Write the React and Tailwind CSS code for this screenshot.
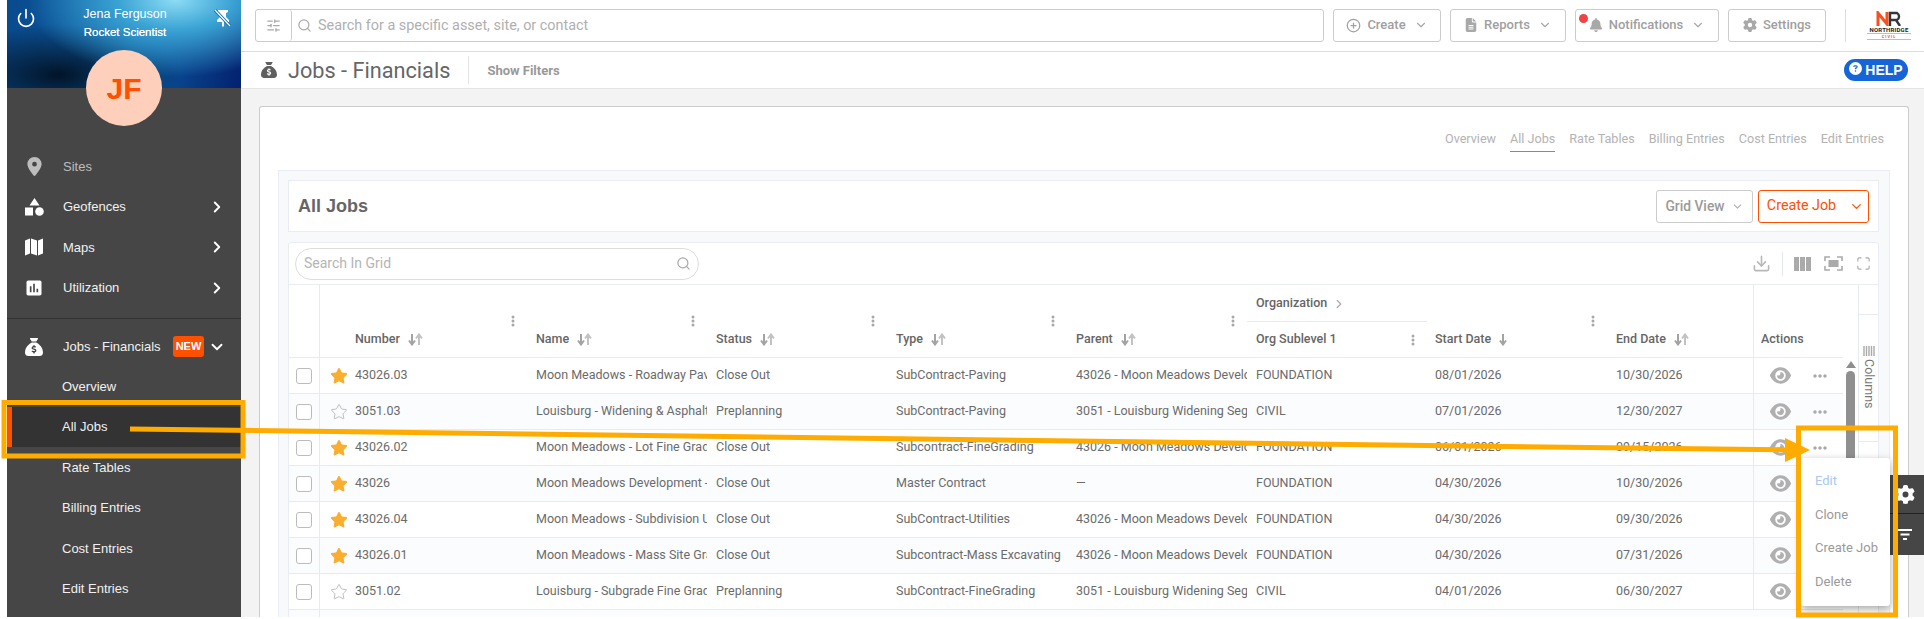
import React from 'react';
import { Power, ChevronRight, ChevronDown, Search, SlidersHorizontal, CirclePlus, Star, Download, Maximize } from 'lucide-react';
import { FaLocationDot, FaSackDollar, FaEye, FaGear, FaBell, FaFileLines, FaEllipsis, FaCircleQuestion } from 'react-icons/fa6';
import { MdInsertChart } from 'react-icons/md';

const rows = [
  { n: '43026.03', s: true, name: 'Moon Meadows - Roadway Paving', st: 'Close Out', t: 'SubContract-Paving', p: '43026 - Moon Meadows Development', o: 'FOUNDATION', a: '08/01/2026', b: '10/30/2026' },
  { n: '3051.03', s: false, name: 'Louisburg - Widening & Asphalt Paving', st: 'Preplanning', t: 'SubContract-Paving', p: '3051 - Louisburg Widening Segment', o: 'CIVIL', a: '07/01/2026', b: '12/30/2027' },
  { n: '43026.02', s: true, name: 'Moon Meadows - Lot Fine Grading', st: 'Close Out', t: 'Subcontract-FineGrading', p: '43026 - Moon Meadows Development', o: 'FOUNDATION', a: '06/01/2026', b: '09/15/2026' },
  { n: '43026', s: true, name: 'Moon Meadows Development - Master', st: 'Close Out', t: 'Master Contract', p: '—', o: 'FOUNDATION', a: '04/30/2026', b: '10/30/2026' },
  { n: '43026.04', s: true, name: 'Moon Meadows - Subdivision Utilities', st: 'Close Out', t: 'SubContract-Utilities', p: '43026 - Moon Meadows Development', o: 'FOUNDATION', a: '04/30/2026', b: '09/30/2026' },
  { n: '43026.01', s: true, name: 'Moon Meadows - Mass Site Grading', st: 'Close Out', t: 'Subcontract-Mass Excavating', p: '43026 - Moon Meadows Development', o: 'FOUNDATION', a: '04/30/2026', b: '07/31/2026' },
  { n: '3051.02', s: false, name: 'Louisburg - Subgrade Fine Grading', st: 'Preplanning', t: 'SubContract-FineGrading', p: '3051 - Louisburg Widening Segment', o: 'CIVIL', a: '04/01/2026', b: '06/30/2027' },
];

function SortIcon({ single }) {
  return (
    <svg width="15" height="13" viewBox="0 0 15 13" className="shrink-0">
      <path d="M4 1v10M1 7.5l3 4 3-4" fill="none" stroke="#a3a3a3" strokeWidth="2" />
      {!single && <path d="M11 12V2M8 5.5l3-4 3 4" fill="none" stroke="#c2c2c2" strokeWidth="2" />}
    </svg>
  );
}

function Dots() {
  return (
    <svg width="4" height="12" viewBox="0 0 4 12" className="shrink-0">
      <circle cx="2" cy="2" r="1.5" fill="#a8a8a8" />
      <circle cx="2" cy="6" r="1.5" fill="#a8a8a8" />
      <circle cx="2" cy="10" r="1.5" fill="#a8a8a8" />
    </svg>
  );
}

function HeadCell({ label, w, pad, single, noDots }) {
  return (
    <div className={`${w} shrink-0 flex flex-col justify-end pb-[9px]`}>
      <div className="h-[18px] flex items-center justify-end pr-[12px]">{!noDots && <Dots />}</div>
      <div className={`${pad} h-[18px] flex items-center gap-[8px] text-[12.5px] font-medium text-[#666]`}>
        <span>{label}</span>
        <SortIcon single={single} />
      </div>
    </div>
  );
}

function NavItem({ icon, label, chevron, dim }) {
  return (
    <div className={`h-[40.5px] flex items-center pl-[17px] pr-[15px] text-[13px] ${dim ? 'text-[#bdbdbd]' : 'text-[#f0f0f0]'}`}>
      <span className="w-[20px] flex justify-center">{icon}</span>
      <span className="ml-[19px] flex-1">{label}</span>
      {chevron && <ChevronRight size={18} strokeWidth={2.5} className="text-white" />}
    </div>
  );
}

function SubItem({ label, active }) {
  return (
    <div className={`h-[40.5px] flex items-center text-[13px] text-[#f0f0f0] ${active ? 'bg-[#333] border-l-[5px] border-[#ff5000] pl-[50px]' : 'pl-[55px]'}`}>
      {label}
    </div>
  );
}

function TopBtn({ w, icon, label, chevron, children }) {
  return (
    <div className={`${w} relative h-[33px] shrink-0 border border-[#ccc] rounded-[3px] bg-white flex items-center justify-center gap-[6px] text-[13px] font-medium text-[#a0a0a0]`}>
      {children}
      {icon}
      <span>{label}</span>
      {chevron && <ChevronDown size={14} className="ml-[2px] text-[#a8a8a8]" />}
    </div>
  );
}

export default function App() {
  return (
    <div className="relative w-[1924px] h-[619px] overflow-hidden bg-white font-['Roboto',sans-serif]">
      <div className="flex h-[617px] pl-[7px]">
        {/* Sidebar */}
        <aside className="w-[234px] shrink-0 bg-[#464646] flex flex-col font-['Liberation_Sans',sans-serif]">
          <div className="relative h-[88px] shrink-0 bg-[radial-gradient(ellipse_at_72%_0%,#8ddcf5_0%,#3aa3d4_24%,rgba(20,90,160,0)_62%),radial-gradient(ellipse_at_22%_85%,#021428_0%,rgba(2,20,40,0)_48%),linear-gradient(100deg,#0a4a8e_0%,#0c5ea3_55%,#04216e_100%)]">
            <div className="flex items-start justify-between pl-[9px] pr-[9px] pt-[6px]">
              <Power size={20} strokeWidth={2} className="text-white mt-[2px]" />
              <div className="text-center text-white">
                <div className="text-[12.5px] leading-[17px]">Jena Ferguson</div>
                <div className="text-[11.5px] leading-[19px] [text-shadow:0_0_0.6px_#fff]">Rocket Scientist</div>
              </div>
              <svg width="18" height="18" viewBox="0 0 18 18" className="mt-[3px]">
                <path d="M4 1h10v2l-2 1v4l3 3v2H10v4l-1 1-1-1v-4H3v-2l3-3V4L4 3z" fill="#fff" />
                <path d="M1 1l15 16" stroke="#0f6cae" strokeWidth="3" />
                <path d="M1 1l15 16" stroke="#fff" strokeWidth="1.2" />
              </svg>
            </div>
            <div className="absolute left-[79px] top-[50px] w-[76px] h-[76px] rounded-full bg-[#fed0bc] flex items-center justify-center text-[#ff5000] text-[30px] font-bold">JF</div>
          </div>
          <nav className="pt-[58px] flex flex-col">
            <NavItem dim label="Sites" icon={<FaLocationDot size={19} className="text-[#bdbdbd]" />} />
            <NavItem chevron label="Geofences" icon={
              <svg width="19" height="18" viewBox="0 0 19 18" fill="#fff">
                <path d="M9.5 0l5 7.5h-10z" />
                <rect x="0" y="9.5" width="8" height="8" />
                <circle cx="14.5" cy="13.5" r="4.3" />
              </svg>
            } />
            <NavItem chevron label="Maps" icon={
              <svg width="18" height="18" viewBox="0 0 18 18" fill="#fff">
                <path d="M0 2.5l5-2v15l-5 2z" />
                <path d="M6 0.5l6 2v15l-6-2z" />
                <path d="M13 2.500l5-2v15l-5 2z" />
              </svg>
            } />
            <NavItem chevron label="Utilization" icon={<MdInsertChart size={22} className="text-white" />} />
            <div className="mt-[10px] border-t border-[#333]" />
            <div className="mt-[8px] h-[39px] flex items-center pl-[17px] pr-[15px] text-[13px] text-[#f0f0f0]">
              <span className="w-[20px] flex justify-center"><FaSackDollar size={18} className="text-white" /></span>
              <span className="ml-[19px] flex-1">Jobs - Financials</span>
              <span className="w-[31px] h-[21px] mr-[4px] bg-[#ff5000] rounded-[3px] text-white text-[11px] font-bold flex items-center justify-center">NEW</span>
              <ChevronDown size={18} strokeWidth={2.5} className="text-white" />
            </div>
            <SubItem label="Overview" />
            <SubItem label="All Jobs" active />
            <SubItem label="Rate Tables" />
            <SubItem label="Billing Entries" />
            <SubItem label="Cost Entries" />
            <SubItem label="Edit Entries" />
          </nav>
        </aside>

        {/* Main */}
        <main className="flex-1 min-w-0 flex flex-col">
          <div className="h-[52px] shrink-0 border-b border-[#ddd] flex items-center pl-[14px] pr-[13px] gap-[9px] pb-[1px]">
            <div className="flex-1 h-[33px] border border-[#ccc] rounded-[3px] flex items-center">
              <div className="w-[36px] h-full border-r border-[#ccc] rounded-[3px] flex items-center justify-center">
                <SlidersHorizontal size={15} className="text-[#a8a8a8]" />
              </div>
              <Search size={15} className="ml-[5px] text-[#aaa]" />
              <span className="ml-[6px] pt-[2px] text-[14.4px] text-[#b0b0b0]">Search for a specific asset, site, or contact</span>
            </div>
            <TopBtn w="w-[108px]" label="Create" chevron icon={<CirclePlus size={15} className="text-[#a0a0a0]" />} />
            <TopBtn w="w-[116px]" label="Reports" chevron icon={<FaFileLines size={14} className="text-[#a8a8a8]" />} />
            <TopBtn w="w-[144px]" label="Notifications" chevron icon={<FaBell size={14} className="text-[#a8a8a8]" />}>
              <span className="absolute left-[3px] top-[4px] w-[9px] h-[9px] rounded-full bg-[#ee4444]" />
            </TopBtn>
            <TopBtn w="w-[98px]" label="Settings" icon={<FaGear size={14} className="text-[#a8a8a8]" />} />
            <div className="ml-[10px] w-px h-[33px] bg-[#ddd]" />
            <div className="ml-[12px] w-[44px] flex flex-col items-center">
              <svg width="26" height="15" viewBox="0 0 26 15">
                <path d="M2 15V2l9 11V1" fill="none" stroke="#f4511e" strokeWidth="3" />
                <path d="M14 15V2h7a4 4 0 0 1 0 7h-7m6 0l4 6" fill="none" stroke="#33383d" strokeWidth="2.4" />
              </svg>
              <span className="text-[6px] leading-[7px] font-bold text-[#222] tracking-[0.2px] whitespace-nowrap">NORTHRIDGE</span>
              <span className="text-[4px] leading-[5px] font-bold text-[#f4511e] tracking-[1px] border-y border-[#f7a98c] w-full text-center">CIVIL</span>
            </div>
          </div>

          <div className="h-[37px] shrink-0 border-b border-[#e4e4e4] flex items-center pl-[20px] pr-[16px]">
            <FaSackDollar size={16} className="text-[#5f5f5f]" />
            <span className="ml-[11px] pt-[2px] text-[21.7px] text-[#666]">Jobs - Financials</span>
            <span className="ml-[18px] w-px h-[28px] bg-[#e4e4e4]" />
            <span className="ml-[18px] pt-[1px] text-[13px] font-bold text-[#999]">Show Filters</span>
            <span className="ml-auto w-[64px] h-[22px] rounded-full bg-[#1565d8] flex items-center justify-center gap-[3px] text-white text-[14px] font-bold font-['Liberation_Sans',sans-serif]">
              <FaCircleQuestion size={13} className="-mt-[3px]" />HELP
            </span>
          </div>

          <div className="flex-1 min-h-0 bg-[#f3f3f3] pt-[17px] pl-[18px] pr-[15px]">
            <div className="h-full bg-white border border-b-0 border-[#ccc] rounded-t-[3px] overflow-hidden">
              <div className="h-[63px] pt-[23px] pr-[24px] flex justify-end gap-[14px] text-[12.625px] text-[#b3b3b3]">
                <span className="h-[22px]">Overview</span>
                <span className="h-[22px] border-b border-[#c9764f]">All Jobs</span>
                <span className="h-[22px]">Rate Tables</span>
                <span className="h-[22px]">Billing Entries</span>
                <span className="h-[22px]">Cost Entries</span>
                <span className="h-[22px]">Edit Entries</span>
              </div>

              <div className="ml-[18px] mr-[18px] h-[460px] bg-[#f8f9fb] border border-[#e9edf3] pt-[9px] pl-[9px] pr-[10px]">
                <div className="h-[52px] bg-white border border-[#e9edf3] flex items-center pl-[9px] pr-[9px]">
                  <span className="flex-1 text-[18px] font-bold text-[#666] font-['Liberation_Sans',sans-serif]">All Jobs</span>
                  <div className="w-[97px] h-[33px] border border-[#ccc] rounded-[3px] flex items-center justify-center gap-[6px] text-[13.8px] font-medium text-[#9a9a9a]">
                    Grid View <ChevronDown size={13} className="text-[#b0b0b0]" />
                  </div>
                  <div className="ml-[5px] w-[111px] h-[33px] border border-[#ff5000] rounded-[3px] flex items-center justify-center gap-[13px] pl-[4px] text-[14.3px] text-[#ff5000]">
                    Create Job <ChevronDown size={15} />
                  </div>
                </div>

                <div className="mt-[10px] bg-white border border-[#e9edf3] rounded-t-[3px]">
                  <div className="h-[42px] border-b border-[#e9edf3] flex items-center pl-[6px] pr-[7px]">
                    <div className="w-[404px] h-[32px] border border-[#ddd] rounded-full flex items-center justify-between pl-[8px] pr-[7px] text-[14px] text-[#b5b5b5]">
                      Search In Grid <Search size={15} className="text-[#aaa]" />
                    </div>
                    <Download size={19} className="ml-auto text-[#b8b8b8]" />
                    <span className="ml-[11px] w-px h-[24px] bg-[#e3e7ed]" />
                    <svg width="17" height="14" viewBox="0 0 17 14" className="ml-[11px]">
                      <rect x="0" y="0" width="5" height="14" fill="#aaa" />
                      <rect x="6" y="0" width="5" height="14" fill="#aaa" />
                      <rect x="12" y="0" width="5" height="14" fill="#aaa" />
                    </svg>
                    <svg width="19" height="15" viewBox="0 0 19 15" className="ml-[13px]">
                      <path d="M1 5V1h5M13 1h5v4M18 10v4h-5M6 14H1v-4" fill="none" stroke="#aaa" strokeWidth="1.6" />
                      <rect x="4.500" y="4" width="10" height="7" fill="#aaa" />
                    </svg>
                    <Maximize size={15} strokeWidth={1.8} className="ml-[13px] text-[#aaa]" />
                  </div>

                  <div className="flex">
                    <div className="flex-1 min-w-0">
                      {/* Header */}
                      <div className="h-[73px] flex border-b border-[#e6eaf1]">
                        <div className="w-[31px] shrink-0 border-r border-[#e6eaf1]" />
                        <HeadCell w="w-[207px]" pad="pl-[35px]" label="Number" />
                        <HeadCell w="w-[180px]" pad="pl-[9px]" label="Name" />
                        <HeadCell w="w-[180px]" pad="pl-[9px]" label="Status" />
                        <HeadCell w="w-[180px]" pad="pl-[9px]" label="Type" />
                        <HeadCell w="w-[180px]" pad="pl-[9px]" label="Parent" />
                        <div className="w-[180px] shrink-0 flex flex-col text-[12.5px] font-medium text-[#666]">
                          <div className="h-[37px] shrink-0 border-b border-[#e6eaf1] flex items-center gap-[5px] pl-[9px] pt-[1px]">
                            Organization <ChevronRight size={14} className="text-[#aaa]" />
                          </div>
                          <div className="flex-1 flex items-center justify-between pl-[9px] pr-[12px]">
                            Org Sublevel 1 <Dots />
                          </div>
                        </div>
                        <HeadCell w="w-[180px]" pad="pl-[8px]" label="Start Date" single />
                        <HeadCell w="w-[146px]" pad="pl-[9px]" label="End Date" noDots />
                        <div className="flex-1 flex flex-col justify-end pb-[9px] pl-[7px] text-[12.5px] font-medium text-[#666] border-l border-[#e6eaf1]">
                          <div className="h-[18px] flex items-center">Actions</div>
                        </div>
                      </div>
                      {/* Rows */}
                      {rows.map((r, i) => (
                        <div key={r.n} className={`h-[36px] flex items-center border-b border-[#e6eaf1] text-[12.5px] text-[#6b6b6b] ${i % 2 ? 'bg-[#fbfcfe]' : 'bg-white'}`}>
                          <div className="w-[31px] h-full shrink-0 border-r border-[#e6eaf1] flex items-center justify-center">
                            <span className="w-[16px] h-[16px] rounded-[3px] border border-[#bbb] bg-white" />
                          </div>
                          <div className="w-[207px] shrink-0 flex items-center gap-[7px] pl-[10px]">
                            <Star size={18} strokeWidth={r.s ? 1.5 : 1} className={r.s ? 'text-[#f9ae2f] fill-[#f9ae2f]' : 'text-[#aaa]'} />
                            <span>{r.n}</span>
                          </div>
                          <div className="w-[180px] shrink-0 pl-[9px] pr-[2px] whitespace-nowrap overflow-hidden">{r.name}</div>
                          <div className="w-[180px] shrink-0 pl-[9px]">{r.st}</div>
                          <div className="w-[180px] shrink-0 pl-[9px] pr-[2px] whitespace-nowrap overflow-hidden">{r.t}</div>
                          <div className="w-[180px] shrink-0 pl-[9px] pr-[2px] whitespace-nowrap overflow-hidden">{r.p}</div>
                          <div className="w-[180px] shrink-0 pl-[9px]">{r.o}</div>
                          <div className="w-[180px] shrink-0 pl-[8px]">{r.a}</div>
                          <div className="w-[146px] shrink-0 pl-[9px]">{r.b}</div>
                          <div className="flex-1 h-full border-l border-[#e6eaf1] flex items-center pl-[16px]">
                            <FaEye size={21} className="text-[#b0b0b0]" />
                            <FaEllipsis size={16} className="ml-[21px] text-[#aaa]" />
                          </div>
                        </div>
                      ))}
                      <div className="h-[36px] flex bg-[#fbfcfe]">
                        <div className="w-[31px] h-full shrink-0 border-r border-[#e6eaf1]" />
                      </div>
                    </div>

                    {/* Vertical scrollbar */}
                    <div className="w-[15px] shrink-0 pt-[76px] flex flex-col items-center bg-white">
                      <span className="w-0 h-0 border-x-[5px] border-x-transparent border-b-[7px] border-b-[#8f8f8f]" />
                      <span className="mt-[3px] w-[9px] h-[220px] rounded-t-full bg-[#8f8f8f]" />
                    </div>

                    {/* Columns tab */}
                    <div className="w-[20px] shrink-0 border-l border-[#e6eaf1] flex flex-col">
                      <div className="h-[30px] border-b border-[#e6eaf1]" />
                      <div className="h-[127px] border-b border-[#e6eaf1] pt-[31px] flex flex-col items-center gap-[3px] text-[12.5px] text-[#777]">
                        <svg width="12" height="10" viewBox="0 0 12 10">
                          <path d="M1 0v10M3.500 0v10M6 0v10M8.500 0v10M11 0v10" stroke="#aaa" strokeWidth="1.4" />
                        </svg>
                        <span className="[writing-mode:vertical-rl]">Columns</span>
                      </div>
                    </div>
                  </div>
                </div>
              </div>
            </div>
          </div>
        </main>
      </div>

      {/* Floating settings tab */}
      <div className="absolute left-[1890px] top-[475px] w-[34px] h-[80px] bg-[#464646] flex flex-col">
        <div className="h-[39px] border-b border-[#222] flex items-center justify-end pr-[9px]">
          <FaGear size={19} className="text-white" />
        </div>
        <div className="flex-1 flex items-center justify-end pr-[12px]">
          <svg width="14" height="12" viewBox="0 0 14 12">
            <path d="M0 1h14M2.500 5.500h9M5 10h4" stroke="#fff" strokeWidth="1.8" />
          </svg>
        </div>
      </div>

      {/* Actions menu */}
      <div className="absolute left-[1801px] top-[458px] w-[89px] h-[148px] bg-white rounded-[3px] shadow-[0_3px_8px_rgba(0,0,0,0.35)] pt-[6px] pl-[14px] flex flex-col text-[13px] text-[#9a9a9a]">
        <div className="h-[33.5px] flex items-center text-[#a8c8f0]">Edit</div>
        <div className="h-[33.5px] flex items-center">Clone</div>
        <div className="h-[33.5px] flex items-center whitespace-nowrap">Create Job</div>
        <div className="h-[33.5px] flex items-center">Delete</div>
      </div>

      {/* Callout overlay */}
      <svg className="absolute left-0 top-0 pointer-events-none" width="1924" height="619" viewBox="0 0 1924 619">
        <rect x="4" y="402.5" width="239" height="53.5" fill="none" stroke="#ffab00" strokeWidth="5" />
        <rect x="1798.5" y="428" width="97" height="187" fill="none" stroke="#ffab00" strokeWidth="5" />
        <path d="M130 429 L1790 450" stroke="#ffab00" strokeWidth="5" />
        <path d="M1785 438 L1810 450 L1785 462 Z" fill="#ffab00" />
      </svg>
    </div>
  );
}
